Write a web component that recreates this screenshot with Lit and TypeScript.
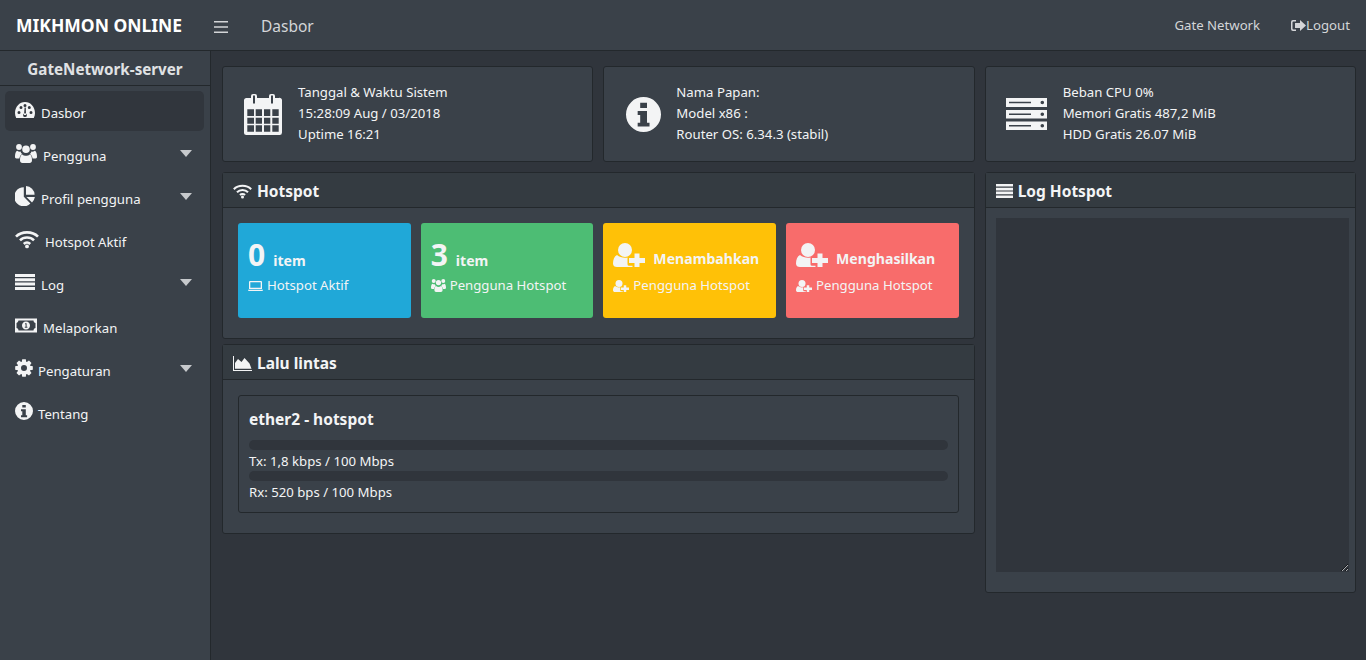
import { LitElement, html, css, svg } from 'lit';
import { customElement } from 'lit/decorators.js';

// circle as a sub path, used to punch holes with evenodd
const dot = (cx: number, cy: number, r: number) =>
  `M${cx - r} ${cy}a${r} ${r} 0 1 0 ${2 * r} 0a${r} ${r} 0 1 0 ${-2 * r} 0z`;

const gear = () => {
  const pts: string[] = [];
  const teeth = 8;
  for (let i = 0; i < teeth; i++) {
    const a = (i / teeth) * Math.PI * 2;
    const w = 0.2;
    const p = (r: number, t: number) =>
      `${(9 + Math.cos(t) * r).toFixed(2)} ${(9 + Math.sin(t) * r).toFixed(2)}`;
    pts.push(p(6.6, a - w * 1.7), p(9, a - w), p(9, a + w), p(6.6, a + w * 1.7));
  }
  return `M${pts.join('L')}z${dot(9, 9, 3)}`;
};

const icon = (w: number, h: number, body: unknown) => html`
  <svg class="ic" width=${w} height=${h} viewBox="0 0 ${w} ${h}" fill="currentColor" fill-rule="evenodd">${body}</svg>
`;

const scaled = (w: number, h: number, vw: number, vh: number, body: unknown) => html`
  <svg class="ic" width=${w} height=${h} viewBox="0 0 ${vw} ${vh}" fill="currentColor" fill-rule="evenodd">${body}</svg>
`;

const wifiBody = svg`
  <g fill="none" stroke="currentColor" stroke-width="2.6">
    <path d="M1 6.6C6.6 .9 17.4 .9 23 6.6"/>
    <path d="M5 10.4C8.8 6.6 15.2 6.6 19 10.4"/>
    <path d="M8.8 14C10.6 12.2 13.4 12.2 15.2 14"/>
  </g>
  <path d=${dot(12, 16.4, 1.9)}/>
`;

const usersBody = svg`
  <path d=${dot(4, 3, 2.9)}/>
  <path d=${dot(18, 3, 2.9)}/>
  <path d=${dot(11, 5.2, 3.8)}/>
  <path d="M2.200 6.800c.9 .7 2.200 1 3.300 .8.300 1 .9 1.900 1.700 2.500-1.500 .9-2.500 2.500-2.800 4.400H1.400C.5 14.500 0 13.800 0 12.800 0 10 .6 7.500 2.200 6.800z"/>
  <path d="M19.800 6.800c-.9 .7-2.200 1-3.300 .8-.3 1-.9 1.900-1.700 2.500 1.500 .9 2.500 2.500 2.800 4.400h3c.9 0 1.400-.7 1.400-1.700 0-2.800-.6-5.300-2.200-6z"/>
  <path d="M7.400 10.400c1 1 2.200 1.400 3.600 1.400s2.600-.4 3.600-1.400c1.700 .2 2.400 2.700 2.400 5.800 0 1.800-1 2.800-2.400 2.800H7.400C6 19 5 18 5 16.200c0-3.100 .7-5.600 2.400-5.800z"/>
`;

const userPlusBody = svg`
  <path d=${dot(12, 7, 7)}/>
  <path d="M4 12c2.200 1.800 5 2.800 8 2.800.9 0 1.800-.1 2.500-.3v6.700a1.500 1.500 0 0 0 1.500 1.500h3.500V24H4c-2.400 0-4-1.400-4-3.600 0-3.700 1.300-7.200 4-8.400z"/>
  <path d="M21.500 10.500h5V15H32v5h-5.500v4h-5v-4H16v-5h5.500z"/>
`;

const infoPath = (s: number) => {
  const k = s / 18;
  return svg`
    <g transform="scale(${k})">
      <path d="${dot(9, 9, 9)}M7.300 3h3.500v2.600H7.300zM6 7.200h4.800v6h1.300v2H6v-2h1.300v-4H6z"/>
    </g>
  `;
};

const NAV = [
  { label: 'Dasbor', gap: 6, active: true, icon: icon(20, 16, svg`
    <path d="M0 11C0 4.900 4.500 0 10 0s10 4.900 10 11c0 1.800-.4 3.500-1.200 5H1.200C.4 14.500 0 12.800 0 11z${dot(4, 10.500, 1.500)}${dot(6, 5.500, 1.500)}${dot(10, 3.600, 1.500)}${dot(16, 10.500, 1.500)}${dot(14.300, 5.500, 1.500)}${dot(10, 13.200, 1.900)}M9 13l.6-7.500h1.200L11 13z"/>
  `) },
  { label: 'Pengguna', gap: 6, caret: true, icon: scaled(22, 21, 22, 19, usersBody) },
  { label: 'Profil pengguna', gap: 6, caret: true, icon: icon(20, 20, svg`
    <path d="M8.800 1.300v9.500l6.600 6.700A9.500 9.500 0 1 1 8.800 1.300z"/>
    <path d="M11 0a9 9 0 0 1 8.600 8.800H11z"/>
    <path d="M11.500 11h8.400a9.700 9.700 0 0 1-2.900 5.400z"/>
  `) },
  { label: 'Hotspot Aktif', gap: 6, icon: icon(24, 19, wifiBody) },
  { label: 'Log', gap: 6, caret: true, icon: icon(20, 16, svg`
    <path d="M0 0h20v3H0zM0 4.300h20v3H0zM0 8.600h20v3H0zM0 13h20v3H0z"/>
  `) },
  { label: 'Melaporkan', gap: 6, icon: scaled(22, 15, 22, 14, svg`
    <path d="M0 0h22v14H0zM3.500 2C3.200 3.500 2 4.500 1.500 4.500v5c1 0 2 1 2 2.500h15c0-1.500 1-2.500 2-2.500v-5c-1 0-2-1-2-2.500z"/>
    <path d="M11 3c2.500 0 4 1.800 4 4s-1.500 4-4 4-4-1.800-4-4 1.500-4 4-4zM10 4.800v1h.6v2.500H9.800v1h2.600v-1h-.8V4.800z"/>
  `) },
  { label: 'Pengaturan', gap: 5, caret: true, icon: icon(18, 18, svg`<path d=${gear()}/>`) },
  { label: 'Tentang', gap: 5, icon: icon(18, 18, infoPath(18)) },
];

@customElement('app-root')
export class AppRoot extends LitElement {
  static styles = css`
    * {
      margin: 0;
      padding: 0;
      box-sizing: border-box;
    }

    :host {
      display: block;
      height: 660px;
      overflow: hidden;
      background: #30353c;
      color: #f3f4f5;
      font-family: "Noto Sans", "Open Sans", sans-serif;
      font-size: 13.2px;
      line-height: 21px;
    }

    .ic {
      flex: none;
      display: block;
    }

    .navbar {
      display: flex;
      align-items: center;
      height: 51px;
      background: #3a4149;
      border-bottom: 1px solid #23282c;
      padding: 0 16px;
      color: #d3d5d8;
    }

    .brand {
      width: 198px;
      color: #fff;
      font-size: 17.5px;
      font-weight: 700;
    }

    .burger {
      width: 47px;
      margin-top: 4px;
    }

    .page-title {
      flex: 1;
      margin-top: 2px;
      font-size: 15.5px;
    }

    .nav-link {
      display: flex;
      align-items: center;
      margin-left: 31px;
      margin-top: 1px;
    }

    .layout {
      display: flex;
      height: 609px;
    }

    .sidebar {
      flex: none;
      width: 211px;
      background: #3a4149;
      border-right: 1px solid #23282c;
    }

    .server-name {
      height: 35px;
      border-bottom: 1px solid #23282c;
      color: #e0e2e4;
      font-size: 15.2px;
      font-weight: 700;
      line-height: 36px;
      text-align: center;
    }

    .menu {
      display: flex;
      flex-direction: column;
      gap: 3px;
      padding: 5px 5px 0;
    }

    .menu-item {
      position: relative;
      display: flex;
      align-items: center;
      height: 40px;
      padding: 0 10px;
      border-radius: 5px;
      margin-right: 1px;
    }

    .menu-item.active {
      background: #31363d;
    }

    .menu-item span {
      margin-top: 4px;
    }

    .menu-item .ic {
      margin-top: -2px;
    }

    .caret {
      position: absolute;
      left: 175px;
      top: 16px;
      width: 0;
      height: 0;
      border-left: 6px solid transparent;
      border-right: 6px solid transparent;
      border-top: 7px solid #c6c9cc;
    }

    .content {
      flex: 1;
      display: grid;
      grid-template-columns: repeat(3, minmax(0, 1fr));
      grid-template-rows: 96px auto;
      gap: 10px;
      padding: 15px 10px 0 11px;
      align-content: start;
    }

    .stat {
      display: flex;
      align-items: center;
      background: #3a4149;
      border: 1px solid #23282c;
      border-radius: 3px;
    }

    .stat-icon {
      flex: none;
      width: 75px;
      padding-left: 21px;
    }

    .stat:nth-child(2) .stat-icon {
      width: 72px;
      padding-left: 22px;
    }

    .stat:nth-child(3) .stat-icon {
      width: 77px;
      padding-left: 20px;
    }

    .stat-text {
      margin-top: -2px;
    }

    .left {
      grid-column: span 2;
      display: flex;
      flex-direction: column;
      gap: 5px;
    }

    .panel {
      background: #3a4149;
      border: 1px solid #23282c;
      border-radius: 3px;
    }

    .panel-head {
      display: flex;
      align-items: center;
      gap: 5px;
      height: 35px;
      padding: 2px 10px 0;
      background: #343b41;
      border-bottom: 1px solid #23282c;
      font-size: 15.5px;
      font-weight: 700;
    }

    .boxes {
      display: flex;
      gap: 10px;
      padding: 15px 15px 20px;
    }

    .box {
      flex: 1;
      height: 95px;
      padding: 10px;
      border-radius: 3px;
    }

    .box-top {
      display: flex;
      align-items: baseline;
      gap: 8px;
      height: 44px;
      font-size: 14.1px;
      font-weight: 700;
      line-height: 44px;
    }

    .box-top b {
      font-size: 30px;
      font-weight: 700;
    }

    .box-top.plus {
      align-items: center;
    }

    .box-top.plus span {
      margin-top: 7px;
    }

    .box-sub {
      display: flex;
      align-items: center;
      gap: 4px;
      margin-top: -2px;
    }

    .traffic-wrap {
      padding: 15px 15px 20px;
    }

    .traffic {
      height: 118px;
      padding: 12px 10px 0;
      border: 1px solid #23282c;
      border-radius: 3px;
    }

    .traffic h4 {
      height: 32px;
      font-size: 15.5px;
      line-height: 22px;
    }

    .traffic p {
      height: 21px;
      line-height: 23px;
    }

    .bar {
      height: 10px;
      border-radius: 5px;
      background: #30353c;
    }

    .log {
      height: 421px;
    }

    .log-body {
      padding: 10px 6px 0 10px;
    }

    textarea {
      display: block;
      width: 100%;
      height: 354px;
      background: #30353c;
      border: 0;
      outline: 0;
      color: #f3f4f5;
    }
  `;

  render() {
    return html`
      <div class="navbar">
        <div class="brand">MIKHMON ONLINE</div>
        <div class="burger">
          ${icon(14, 12, svg`<path d="M0 0h14v1.600H0zM0 5.200h14v1.600H0zM0 10.400h14V12H0z"/>`)}
        </div>
        <div class="page-title">Dasbor</div>
        <div class="nav-link">Gate Network</div>
        <div class="nav-link">
          ${icon(15, 11, svg`
            <path d="M0 2a2 2 0 0 1 2-2h3v1.500H2.500a1 1 0 0 0-1 1v6a1 1 0 0 0 1 1H5V11H2a2 2 0 0 1-2-2z"/>
            <path d="M9 0l6 5.500-6 5.500V8H4V3h5z"/>
          `)}Logout
        </div>
      </div>
      <div class="layout">
        <div class="sidebar">
          <div class="server-name">GateNetwork-server</div>
          <div class="menu">
            ${NAV.map(item => html`
              <div class="menu-item ${item.active ? 'active' : ''}" style="gap:${item.gap}px">
                ${item.icon}
                <span>${item.label}</span>
                ${item.caret ? html`<i class="caret"></i>` : ''}
              </div>
            `)}
          </div>
        </div>
        <div class="content">
          <div class="stat">
            <div class="stat-icon">
              ${icon(38, 41, svg`
                <path d="M2.500 4H7V2a2 2 0 0 1 2-2h2a2 2 0 0 1 2 2v2h12V2a2 2 0 0 1 2-2h2a2 2 0 0 1 2 2v2h3.500A2.500 2.500 0 0 1 38 6.500V38.500A2.500 2.500 0 0 1 35.500 41H2.500A2.500 2.500 0 0 1 0 38.500V6.500A2.500 2.500 0 0 1 2.500 4zM9 1.500v8h2v-8zM27 1.500v8h2v-8zM3.300 15.300v6.700h6.700v-6.700zM11.700 15.300v6.700H18v-6.700zM20 15.300v6.700h6.300v-6.700zM28.300 15.300v6.700h6.400v-6.700zM3.300 23.700v6H10v-6zM11.700 23.700v6H18v-6zM20 23.700v6h6.300v-6zM28.300 23.700v6h6.400v-6zM3.300 31.300v6.400H10v-6.400zM11.700 31.300v6.400H18v-6.400zM20 31.300v6.400h6.300v-6.400zM28.300 31.300v6.400h6.400v-6.400z"/>
              `)}
            </div>
            <div class="stat-text">
              <div>Tanggal &amp; Waktu Sistem</div>
              <div>15:28:09 Aug / 03/2018</div>
              <div>Uptime 16:21</div>
            </div>
          </div>
          <div class="stat">
            <div class="stat-icon">${icon(35, 35, infoPath(35))}</div>
            <div class="stat-text">
              <div>Nama Papan:</div>
              <div>Model x86 :</div>
              <div>Router OS: 6.34.3 (stabil)</div>
            </div>
          </div>
          <div class="stat">
            <div class="stat-icon">
              ${icon(41, 32, svg`
                <path d="M0 0h41v9H0zM3 3.700v1.600h22V3.700zM34.500 4.500a1.800 1.800 0 1 0 3.600 0a1.800 1.800 0 1 0-3.600 0z"/>
                <path d="M0 12h41v8.500H0zM3 15.500v1.600h22v-1.600zM34.500 16.300a1.800 1.800 0 1 0 3.600 0a1.800 1.800 0 1 0-3.600 0z"/>
                <path d="M0 23.500h41V32H0zM3 27v1.600h22V27zM34.500 27.800a1.800 1.800 0 1 0 3.600 0a1.800 1.800 0 1 0-3.600 0z"/>
              `)}
            </div>
            <div class="stat-text">
              <div>Beban CPU 0%</div>
              <div>Memori Gratis 487,2 MiB</div>
              <div>HDD Gratis 26.07 MiB</div>
            </div>
          </div>

          <div class="left">
            <div class="panel">
              <div class="panel-head">${scaled(19, 15, 24, 19, wifiBody)}Hotspot</div>
              <div class="boxes">
                <div class="box" style="background:#20a8d8">
                  <div class="box-top"><b>0</b> item</div>
                  <div class="box-sub">
                    ${icon(15, 10, svg`
                      <path d="M2 0h11a1 1 0 0 1 1 1v7H1V1a1 1 0 0 1 1-1zM2.300 1.200v5.600h10.400V1.200z"/>
                      <path d="M0 8.800h15v.2a1 1 0 0 1-1 1H1a1 1 0 0 1-1-1z"/>
                    `)}
                    Hotspot Aktif
                  </div>
                </div>
                <div class="box" style="background:#4dbd74">
                  <div class="box-top"><b>3</b> item</div>
                  <div class="box-sub">${scaled(15, 13, 22, 19, usersBody)} Pengguna Hotspot</div>
                </div>
                <div class="box" style="background:#ffc107">
                  <div class="box-top plus">${icon(32, 24, userPlusBody)} <span>Menambahkan</span></div>
                  <div class="box-sub">${scaled(16, 12, 32, 24, userPlusBody)} Pengguna Hotspot</div>
                </div>
                <div class="box" style="background:#f86c6b">
                  <div class="box-top plus">${icon(32, 24, userPlusBody)} <span>Menghasilkan</span></div>
                  <div class="box-sub">${scaled(16, 12, 32, 24, userPlusBody)} Pengguna Hotspot</div>
                </div>
              </div>
            </div>
            <div class="panel">
              <div class="panel-head">
                ${icon(19, 15, svg`
                  <path d="M0 0h1v14h18v1H0z"/>
                  <path d="M2 12.800V7l3-4 3.500 3L11.500 2l5 5.500 2 5.300z"/>
                `)}
                Lalu lintas
              </div>
              <div class="traffic-wrap">
                <div class="traffic">
                  <h4>ether2 - hotspot</h4>
                  <div class="bar"></div>
                  <p>Tx: 1,8 kbps / 100 Mbps</p>
                  <div class="bar"></div>
                  <p>Rx: 520 bps / 100 Mbps</p>
                </div>
              </div>
            </div>
          </div>

          <div class="panel log">
            <div class="panel-head">
              ${icon(17, 14, svg`<path d="M0 0h17v2.600H0zM0 3.800h17v2.600H0zM0 7.600h17v2.600H0zM0 11.400h17V14H0z"/>`)}
              Log Hotspot
            </div>
            <div class="log-body">
              <textarea></textarea>
            </div>
          </div>
        </div>
      </div>
    `;
  }
}
